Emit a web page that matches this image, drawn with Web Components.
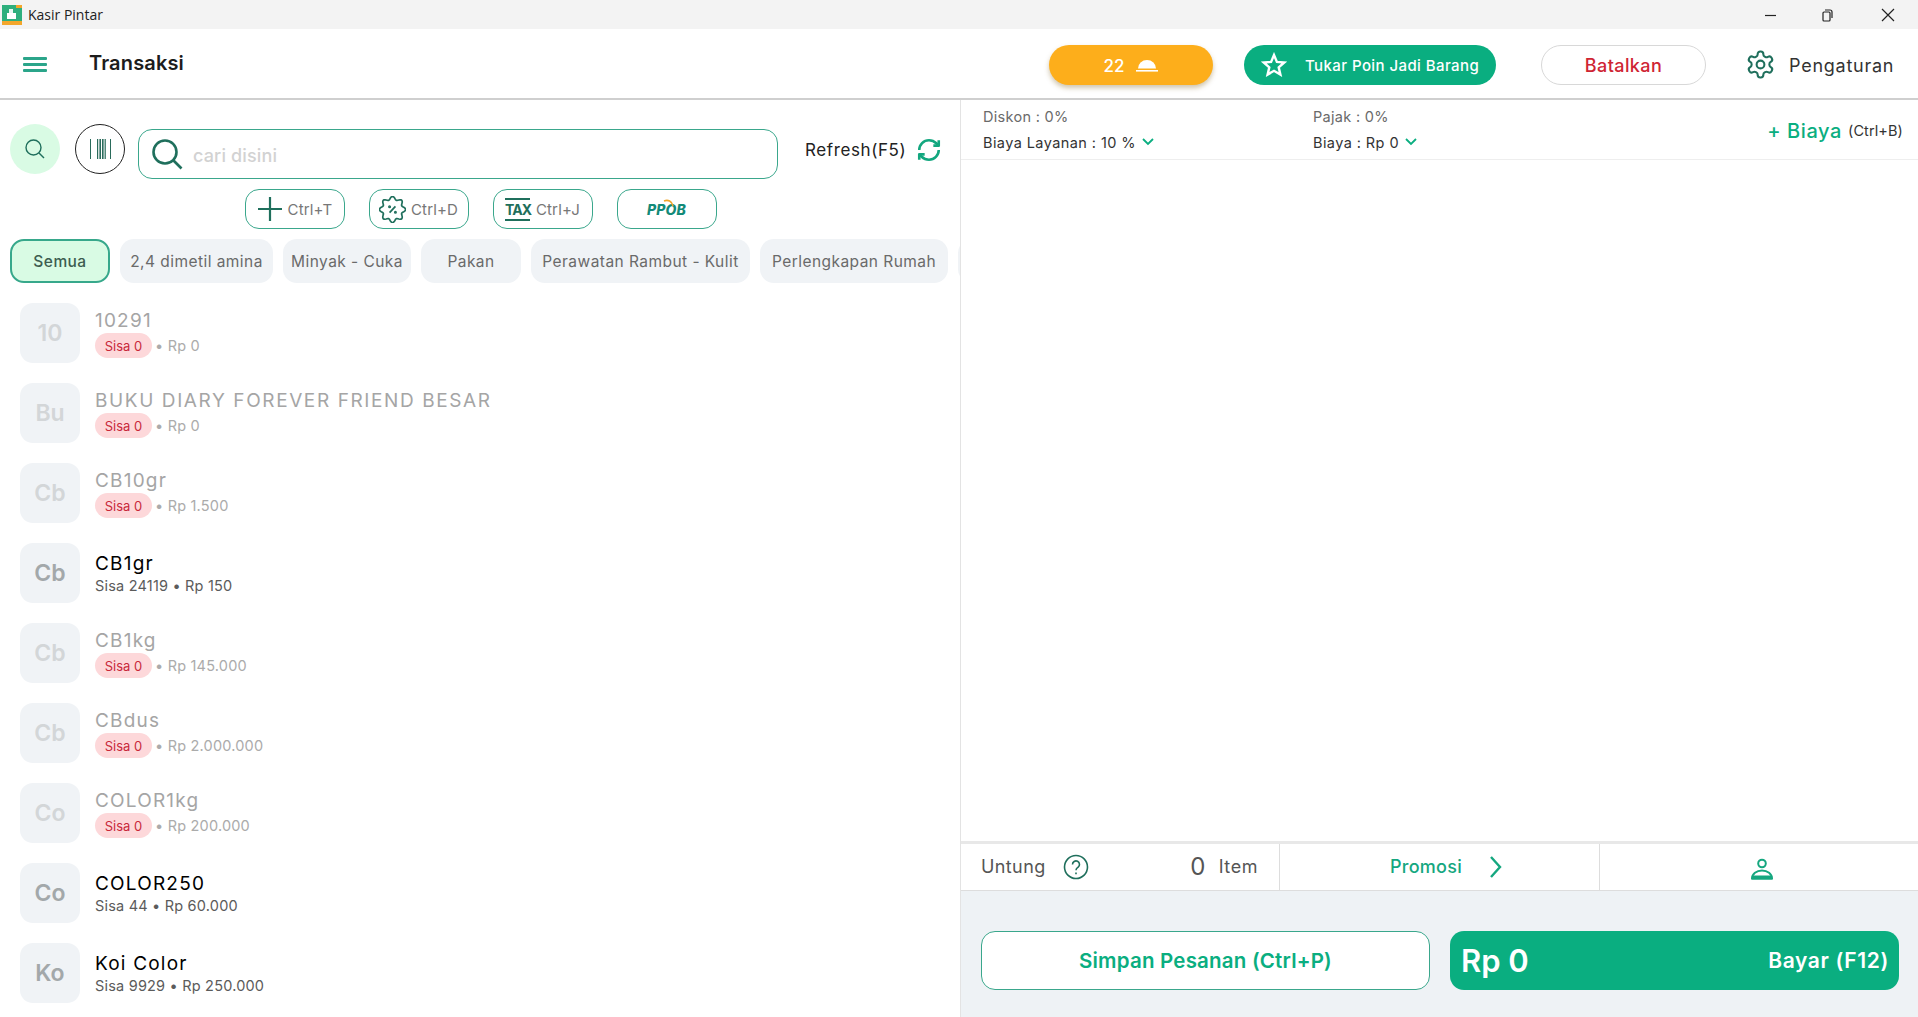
<!DOCTYPE html>
<html lang="id">
<head>
<meta charset="utf-8">
<title>Kasir Pintar</title>
<style>
  html, body { margin: 0; height: 100%; overflow: hidden; background: #fff; }
  body { font-family: Inter, "Liberation Sans", sans-serif; display: flex; flex-direction: column; }
</style>
</head>
<body>
<kp-titlebar></kp-titlebar>
<kp-header></kp-header>
<kp-main>
  <kp-products slot="left"></kp-products>
  <kp-cart slot="right"></kp-cart>
</kp-main>

<script>
const GREEN = '#0aae80';
const DARK = '#1f6f5c';
const LINE = '#3aa78c';

// wavy outline of the discount badge
function badgePath() {
  const pts = [];
  for (let i = 0; i < 96; i++) {
    const a = i / 96 * Math.PI * 2;
    const r = 10.2 + 1.4 * Math.cos(8 * a);
    pts.push((12 + r * Math.cos(a)).toFixed(2) + ' ' + (12 + r * Math.sin(a)).toFixed(2));
  }
  return 'M' + pts.join('L') + 'Z';
}

class KpTitlebar extends HTMLElement {
  connectedCallback() {
    this.attachShadow({ mode: 'open' });
    this.shadowRoot.innerHTML = `
      <style>
        :host { display: flex; align-items: center; height: 29px; background: #f3f3f3; flex: none; position: relative; }
        .app { display: flex; align-items: center; padding-left: 2px; gap: 6px; font: 14px "Open Sans", sans-serif; color: #222; }
        .ctrl { margin-left: auto; display: flex; align-items: center; gap: 42px; padding-right: 23px; }
        .ctrl svg:last-child { margin-left: 5px; }
        svg { display: block; }
      </style>
      <div class="app">
        <svg width="20" height="20" viewBox="0 0 20 20">
          <rect width="20" height="20" fill="#2eaf7d"/>
          <rect y="16" width="20" height="4" fill="#f3a62b"/>
          <rect x="14" width="6" height="3" fill="#f3a62b"/>
          <rect x="5" y="8" width="9" height="6" fill="#fff"/>
          <rect x="7" y="4" width="4" height="4" fill="#e9f7f1"/>
        </svg>
        <span>Kasir Pintar</span>
      </div>
      <div class="ctrl">
        <svg width="14" height="14" viewBox="0 0 14 14"><path d="M1 7.5h11" stroke="#222" stroke-width="1.2"/></svg>
        <svg width="14" height="14" viewBox="0 0 14 14" fill="none" stroke="#222" stroke-width="1.2"><rect x="3" y="4" width="7" height="9" rx="1"/><path d="M5 2h5a2 2 0 0 1 2 2v6"/></svg>
        <svg width="14" height="14" viewBox="0 0 14 14" stroke="#222" stroke-width="1.2"><path d="M1 1l12 12M13 1L1 13"/></svg>
      </div>
    `;
  }
}
customElements.define('kp-titlebar', KpTitlebar);

class KpHeader extends HTMLElement {
  connectedCallback() {
    this.attachShadow({ mode: 'open' });
    this.shadowRoot.innerHTML = `
      <style>
        :host { display: flex; align-items: center; height: 69px; flex: none; border-bottom: 2px solid #cfcfcf; box-sizing: content-box; font-family: Inter, sans-serif; }
        .burger { width: 24px; height: 15px; margin: 1px 0 0 23px; display: flex; flex-direction: column; justify-content: space-between; }
        .burger i { display: block; height: 3px; background: #2ba58a; border-radius: 1px; }
        h1 { margin: 0 0 1px 42px; font-size: 20px; font-weight: 600; color: #1c1c1c; letter-spacing: .15px; }
        .right { margin: 2px 23px 0 auto; display: flex; align-items: center; height: 40px; }
        .pill { height: 40px; border-radius: 20px; display: flex; align-items: center; justify-content: center; box-sizing: border-box; }
        .order { width: 164px; background: #fdae1b; color: #fff; gap: 12px; font-size: 17px; font-weight: 500; box-shadow: 0 3px 5px rgba(120,90,20,.35); }
        .order span, .point span { margin-top: 2px; }
        .point { width: 252px; margin-left: 31px; background: ${GREEN}; color: #fff; font-size: 15px; font-weight: 500; gap: 18px; justify-content: flex-start; padding-left: 17px; letter-spacing: .42px; white-space: nowrap; }
        .cancel { width: 165px; margin-left: 45px; padding-top: 2px; background: #fff; border: 1px solid #d8d8d8; color: #cf2433; font-size: 18px; font-weight: 500; letter-spacing: .4px; }
        .settings { display: flex; align-items: center; gap: 13px; margin-left: 39px; width: 150px; font-size: 18px; color: #333; letter-spacing: .75px; }
        .settings span { margin-top: 2px; }
        svg { display: block; flex: none; }
      </style>
      <div class="burger"><i></i><i></i><i></i></div>
      <h1>Transaksi</h1>
      <div class="right">
        <div class="pill order">
          <span>22</span>
          <svg width="22" height="14" viewBox="0 0 22 14" fill="#fff"><path d="M2 10.5a9 8.5 0 0 1 18 0z"/><rect x="0" y="12" width="22" height="1.6"/></svg>
        </div>
        <div class="pill point">
          <svg width="26" height="25" viewBox="0 0 26 25" fill="none" stroke="#fff" stroke-width="2.4" stroke-linejoin="miter"><path d="M13 3l2.9 6.9 7.4.6-5.6 4.9 1.7 7.2L13 18.8l-6.4 3.8 1.7-7.2-5.6-4.9 7.4-.6z"/></svg>
          <span>Tukar Poin Jadi Barang</span>
        </div>
        <div class="pill cancel">Batalkan</div>
        <div class="settings">
          <svg width="31" height="31" viewBox="0 0 24 24" fill="none" stroke="${DARK}" stroke-width="1.6" stroke-linejoin="round"><path d="M12.22 2h-.44a2 2 0 0 0-2 2v.18a2 2 0 0 1-1 1.73l-.43.25a2 2 0 0 1-2 0l-.15-.08a2 2 0 0 0-2.73.73l-.22.38a2 2 0 0 0 .73 2.73l.15.1a2 2 0 0 1 1 1.72v.51a2 2 0 0 1-1 1.74l-.15.09a2 2 0 0 0-.73 2.73l.22.38a2 2 0 0 0 2.73.73l.15-.08a2 2 0 0 1 2 0l.43.25a2 2 0 0 1 1 1.73V20a2 2 0 0 0 2 2h.44a2 2 0 0 0 2-2v-.18a2 2 0 0 1 1-1.73l.43-.25a2 2 0 0 1 2 0l.15.08a2 2 0 0 0 2.73-.73l.22-.39a2 2 0 0 0-.73-2.73l-.15-.08a2 2 0 0 1-1-1.74v-.5a2 2 0 0 1 1-1.74l.15-.09a2 2 0 0 0 .73-2.73l-.22-.38a2 2 0 0 0-2.73-.73l-.15.08a2 2 0 0 1-2 0l-.43-.25a2 2 0 0 1-1-1.73V4a2 2 0 0 0-2-2z"/><circle cx="12" cy="12" r="3"/></svg>
          <span>Pengaturan</span>
        </div>
      </div>
    `;
  }
}
customElements.define('kp-header', KpHeader);

class KpMain extends HTMLElement {
  connectedCallback() {
    this.attachShadow({ mode: 'open' });
    this.shadowRoot.innerHTML = `
      <style>
        :host { display: grid; grid-template-columns: 960px 1fr; flex: 1; min-height: 0; }
        ::slotted(*) { min-width: 0; min-height: 0; }
      </style>
      <slot name="left"></slot>
      <slot name="right"></slot>
    `;
  }
}
customElements.define('kp-main', KpMain);

class KpChip extends HTMLElement {
  connectedCallback() {
    this.attachShadow({ mode: 'open' });
    this.shadowRoot.innerHTML = `
      <style>
        :host { display: flex; align-items: center; justify-content: center; flex: none; height: 44px; box-sizing: border-box; border-radius: 14px; background: #f0f3f6; color: #6a6a6a; font-size: 15.5px; letter-spacing: .45px; white-space: nowrap; }
        :host([active]) { background: #d9fbe4; border: 2px solid #37a88b; color: #3d5d50; font-weight: 500; }
      </style>
      <slot></slot>
    `;
  }
}
customElements.define('kp-chip', KpChip);

class KpProduct extends HTMLElement {
  connectedCallback() {
    const name = this.getAttribute('name');
    const stock = this.getAttribute('stock');
    const price = this.getAttribute('price');
    const empty = stock === '0';
    const initials = name[0] + name[1].toLowerCase();
    this.attachShadow({ mode: 'open' });
    this.shadowRoot.innerHTML = `
      <style>
        :host { display: flex; flex: none; height: 60px; gap: 15px; }
        .thumb { width: 60px; height: 60px; flex: none; border-radius: 13px; background: #f0f3f6; color: #a3a8aa; display: flex; align-items: center; justify-content: center; font-size: 23px; font-weight: 600; padding-bottom: 0; }
        .name { font-size: 19px; line-height: 22px; color: #000; letter-spacing: var(--track, 1.2px); white-space: nowrap; font-weight: 400; }
        .sub { font-size: 14.5px; line-height: 22px; color: #5b5b5b; letter-spacing: .2px; white-space: nowrap; display: flex; align-items: center; }
        .info { padding-top: 10px; }
        :host([out]) .thumb { color: #d3d6d8; }
        :host([out]) .name { color: #a5a5a5; }
        :host([out]) .sub { color: #ababab; margin-top: 1px; height: 25px; }
        :host([out]) .info { padding-top: 7px; }
        .badge { width: 57px; height: 25px; border-radius: 12.5px; background: #fdd8da; color: #c8283a; font-size: 13px; display: flex; align-items: center; justify-content: center; margin-right: 3px; letter-spacing: 0; }
      </style>
      <div class="thumb">${initials}</div>
      <div class="info">
        <div class="name">${name}</div>
        <div class="sub">${empty ? `<span class="badge">Sisa 0</span>• Rp ${price}` : `Sisa ${stock} • Rp ${price}`}</div>
      </div>
    `;
    if (empty) this.setAttribute('out', '');
  }
}
customElements.define('kp-product', KpProduct);

class KpProducts extends HTMLElement {
  connectedCallback() {
    this.attachShadow({ mode: 'open' });
    this.shadowRoot.innerHTML = `
      <style>
        :host { display: flex; flex-direction: column; overflow: hidden; height: 100%; }
        .search { display: flex; align-items: flex-start; padding: 24px 0 0 10px; }
        .round { width: 50px; height: 50px; border-radius: 50%; box-sizing: border-box; display: flex; align-items: center; justify-content: center; flex: none; }
        .find { background: #d9fbe4; }
        .scan { border: 1.5px solid #222; margin-left: 15px; }
        .input { width: 640px; height: 50px; margin: 5px 0 0 13px; flex: none; box-sizing: border-box; border: 1.5px solid ${LINE}; border-radius: 14px; display: flex; align-items: center; padding-left: 12px; gap: 10px; color: #d2d2d2; font-size: 18px; font-weight: 500; letter-spacing: .15px; }
        .input span { margin-top: 3px; }
        .refresh { display: flex; align-items: center; margin: 13px 0 0 27px; gap: 10px; font-size: 17px; color: #222; letter-spacing: .6px; }
        .tools { display: flex; justify-content: center; gap: 24px; margin-top: 10px; padding-left: 1px; }
        .tool { width: 100px; height: 40px; box-sizing: border-box; border: 1.5px solid ${LINE}; border-radius: 14px; display: flex; align-items: center; justify-content: center; gap: 5px; font-size: 15px; color: #777; letter-spacing: .15px; }
        .tax { display: block; font-size: 14px; font-weight: 700; color: ${DARK}; border-top: 2px solid ${DARK}; border-bottom: 2px solid ${DARK}; line-height: 19px; width: 25px; letter-spacing: -.9px; text-align: center; margin-right: 1px; }
        .ppob { position: relative; font-size: 14px; font-weight: 800; font-style: italic; color: #138a78; letter-spacing: .2px; }
        .ppob svg { position: absolute; left: 16px; top: -2px; }
        .chips { display: flex; gap: 10px; margin-top: 10px; padding-left: 10px; overflow: hidden; flex: none; }
        .list { display: flex; flex-direction: column; gap: 20px; margin-top: 20px; padding-left: 20px; }
        svg { display: block; flex: none; }
      </style>
      <div class="search">
        <div class="round find">
          <svg width="22" height="22" viewBox="0 0 22 22" fill="none" stroke="${DARK}" stroke-width="1.4"><circle cx="9.5" cy="9.5" r="7.5"/><path d="M15 15l5 5"/></svg>
        </div>
        <div class="round scan">
          <svg width="22" height="20" viewBox="0 0 22 20" fill="#2a6b5b"><rect x="1" width="1" height="20"/><rect x="8" width="1.2" height="20"/><rect x="10.4" width="1.6" height="20"/><rect x="13" width="1.6" height="20"/><rect x="15.6" width="1.2" height="20"/><rect x="21" width="1" height="20"/></svg>
        </div>
        <div class="input">
          <svg width="32" height="32" viewBox="0 0 32 32" fill="none" stroke="${DARK}" stroke-width="2.6"><circle cx="14" cy="14" r="11.5"/><path d="M22.5 22.5l8 8"/></svg>
          <span>cari disini</span>
        </div>
        <div class="refresh">
          <span>Refresh(F5)</span>
          <svg width="26" height="26" viewBox="0 0 24 24" fill="none" stroke="#13a77f" stroke-width="2.4" stroke-linejoin="round"><path d="M3 12a9 9 0 0 1 9-9 9.75 9.75 0 0 1 6.74 2.74L21 8"/><path d="M21 3v5h-5"/><path d="M21 12a9 9 0 0 1-9 9 9.75 9.75 0 0 1-6.74-2.74L3 16"/><path d="M8 16H3v5"/></svg>
        </div>
      </div>
      <div class="tools">
        <div class="tool">
          <svg width="26" height="26" viewBox="0 0 26 26" stroke="${DARK}" stroke-width="2.2"><path d="M13 1v24M1 13h24"/></svg>
          <span>Ctrl+T</span>
        </div>
        <div class="tool">
          <svg width="27" height="27" viewBox="0 0 24 24" fill="none" stroke="${DARK}" stroke-width="1.5" stroke-linejoin="round"><path d="${badgePath()}"/><path d="M14.6 9.2l-5.2 5.6"/><circle cx="9.4" cy="9.6" r=".6"/><circle cx="14.6" cy="14.4" r=".6"/></svg>
          <span>Ctrl+D</span>
        </div>
        <div class="tool">
          <span class="tax">TAX</span>
          <span>Ctrl+J</span>
        </div>
        <div class="tool">
          <span class="ppob">PPOB<svg width="12" height="9" viewBox="0 0 12 9" fill="none" stroke="#f0a52a" stroke-width="1.6"><path d="M1 2c4-1.5 8 0 9 5"/></svg></span>
        </div>
      </div>
      <div class="chips">
        <kp-chip active style="width:100px">Semua</kp-chip>
        <kp-chip style="width:153px">2,4 dimetil amina</kp-chip>
        <kp-chip style="width:128px">Minyak - Cuka</kp-chip>
        <kp-chip style="width:100px">Pakan</kp-chip>
        <kp-chip style="width:219px">Perawatan Rambut - Kulit</kp-chip>
        <kp-chip style="width:188px">Perlengkapan Rumah</kp-chip>
        <kp-chip style="width:100px"></kp-chip>
      </div>
      <div class="list">
        <kp-product name="10291" stock="0" price="0"></kp-product>
        <kp-product name="BUKU DIARY FOREVER FRIEND BESAR" stock="0" price="0" style="--track:1.6px"></kp-product>
        <kp-product name="CB10gr" stock="0" price="1.500"></kp-product>
        <kp-product name="CB1gr" stock="24119" price="150"></kp-product>
        <kp-product name="CB1kg" stock="0" price="145.000"></kp-product>
        <kp-product name="CBdus" stock="0" price="2.000.000"></kp-product>
        <kp-product name="COLOR1kg" stock="0" price="200.000"></kp-product>
        <kp-product name="COLOR250" stock="44" price="60.000"></kp-product>
        <kp-product name="Koi Color" stock="9929" price="250.000"></kp-product>
      </div>
    `;
  }
}
customElements.define('kp-products', KpProducts);

class KpCart extends HTMLElement {
  connectedCallback() {
    const chev = `<svg width="12" height="8" viewBox="0 0 12 8" fill="none" stroke="${GREEN}" stroke-width="1.8"><path d="M1 1l5 5 5-5"/></svg>`;
    this.attachShadow({ mode: 'open' });
    this.shadowRoot.innerHTML = `
      <style>
        :host { display: flex; flex-direction: column; height: 100%; border-left: 1px solid #e3e3e3; box-sizing: border-box; }
        .info { height: 60px; flex: none; box-sizing: border-box; border-bottom: 1px solid #eee; padding: 3px 15px 0 22px; display: flex; font-size: 14.5px; color: #333; letter-spacing: .42px; }
        .col { width: 330px; display: grid; grid-template-rows: 26px 26px; align-items: center; }
        .col .muted { color: #6a6a6a; letter-spacing: .3px; }
        .col div { display: flex; align-items: center; gap: 6px; white-space: nowrap; }
        .add { margin-left: auto; display: flex; align-items: center; gap: 6px; margin-top: -1px; white-space: nowrap; letter-spacing: 0; }
        .add b { font-size: 20px; font-weight: 500; color: ${GREEN}; letter-spacing: .6px; }
        .add span { font-size: 14.5px; color: #333; letter-spacing: .1px; }
        .space { flex: 1; }
        .stats { height: 50px; flex: none; box-sizing: border-box; border-top: 3px solid #e8e8e8; border-bottom: 1px solid #ddd; display: grid; grid-template-columns: 319px 320px 1fr; }
        .cell { display: flex; align-items: center; box-sizing: border-box; border-right: 1.5px solid #ddd; }
        .cell:last-child { border-right: 0; justify-content: center; padding: 4px 0 0 6px; }
        .gain { padding: 0 0 1px 20px; color: #555; font-size: 18px; letter-spacing: .4px; }
        .gain svg { margin-left: 17px; }
        .gain .count { margin-left: auto; font-size: 24px; color: #555; }
        .gain .unit { margin: 0 21px 0 13px; letter-spacing: .55px; }
        .promo { justify-content: center; gap: 26px; color: #15a77f; font-size: 18px; font-weight: 500; padding: 0 0 1px 15px; letter-spacing: .3px; }
        .foot { height: 126px; flex: none; box-sizing: border-box; background: #eef2f5; padding: 40px 19px 0 20px; display: flex; gap: 20px; }
        .btn { width: 450px; height: 59px; box-sizing: border-box; border-radius: 14px; display: flex; align-items: center; }
        .save { border: 1.5px solid ${LINE}; background: #fff; color: ${GREEN}; justify-content: center; font-size: 20.5px; font-weight: 600; letter-spacing: .2px; }
        .pay { background: ${GREEN}; color: #fff; justify-content: space-between; padding: 0 10px 0 11px; font-weight: 600; }
        .pay .sum { font-size: 31px; }
        .pay .go { font-size: 21px; letter-spacing: .65px; }
        svg { display: block; flex: none; }
      </style>
      <div class="info">
        <div class="col">
          <div class="muted">Diskon : 0%</div>
          <div>Biaya Layanan : 10 % ${chev}</div>
        </div>
        <div class="col">
          <div class="muted">Pajak : 0%</div>
          <div>Biaya : Rp 0 ${chev}</div>
        </div>
        <div class="add"><b>+ Biaya</b><span>(Ctrl+B)</span></div>
      </div>
      <div class="space"></div>
      <div class="stats">
        <div class="cell gain">
          <span>Untung</span>
          <svg width="26" height="26" viewBox="0 0 26 26" fill="none" stroke="${DARK}" stroke-width="1.6"><circle cx="13" cy="13" r="11.5"/><path d="M9.5 10.5a3.5 3.5 0 1 1 5.5 2.8c-1.2.9-2 1.4-2 2.9"/><path d="M13 18.5v1.8"/></svg>
          <span class="count">0</span>
          <span class="unit">Item</span>
        </div>
        <div class="cell promo">
          <span>Promosi</span>
          <svg width="16" height="24" viewBox="0 0 16 24" fill="none" stroke="#15a77f" stroke-width="2.4"><path d="M3 2l9 10-9 10"/></svg>
        </div>
        <div class="cell">
          <svg width="24" height="24" viewBox="0 0 24 24"><circle cx="12" cy="6.5" r="3.8" fill="none" stroke="#15a77f" stroke-width="2"/><path d="M2 21.5a10 8 0 0 1 20 0z" fill="none" stroke="#15a77f" stroke-width="2"/><path d="M2 18.5h20v4H2z" fill="#15a77f"/></svg>
        </div>
      </div>
      <div class="foot">
        <div class="btn save">Simpan Pesanan (Ctrl+P)</div>
        <div class="btn pay"><span class="sum">Rp 0</span><span class="go">Bayar (F12)</span></div>
      </div>
    `;
  }
}
customElements.define('kp-cart', KpCart);
</script>
</body>
</html>
